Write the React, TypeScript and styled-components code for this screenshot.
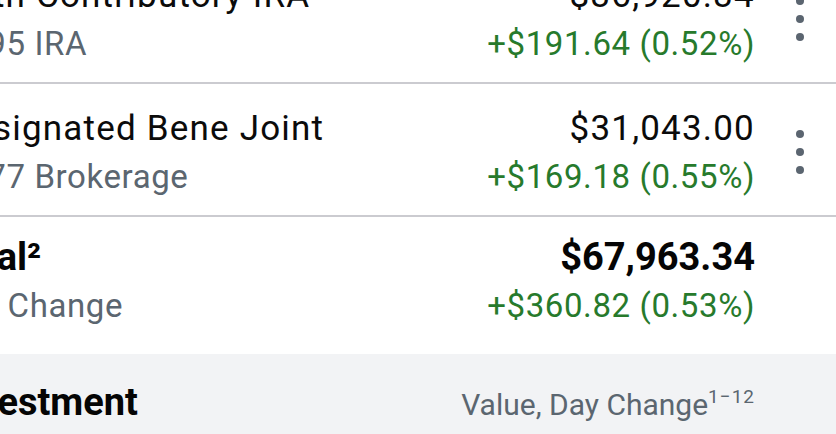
import styled, { createGlobalStyle } from "styled-components";

const GlobalStyle = createGlobalStyle`
  html, body {
    margin: 0;
    padding: 0;
    background: #ffffff;
  }
  body {
    font-family: Roboto, "Noto Sans", "Liberation Sans", sans-serif;
    overflow: hidden;
  }
`;

type Account = {
  name: string;
  number: string;
  type: string;
  value: string;
  change: string;
};

const accounts: Account[] = [
  {
    name: "Roth Contributory IRA",
    number: "1295",
    type: "IRA",
    value: "$36,920.34",
    change: "+$191.64 (0.52%)",
  },
  {
    name: "Designated Bene Joint",
    number: "4877",
    type: "Brokerage",
    value: "$31,043.00",
    change: "+$169.18 (0.55%)",
  },
];

function KebabIcon() {
  return (
    <svg width="8" height="44" viewBox="0 0 8 44" aria-hidden="true">
      <circle cx="4" cy="4" r="4" fill="#5b6570" />
      <circle cx="4" cy="22" r="4" fill="#5b6570" />
      <circle cx="4" cy="40" r="4" fill="#5b6570" />
    </svg>
  );
}

export default function App() {
  return (
    <>
      <GlobalStyle />
      <Viewport>
        <Sheet>
          {accounts.map((account) => (
            <AccountRow key={account.name}>
              <Stack>
                <Title>{account.name}</Title>
                <Sub>
                  {account.number} {account.type}
                </Sub>
              </Stack>
              <Figures>
                <Title>{account.value}</Title>
                <Gain>{account.change}</Gain>
              </Figures>
              <MenuButton aria-label="Account options">
                <KebabIcon />
              </MenuButton>
            </AccountRow>
          ))}

          <TotalRow>
            <Stack $gap={3}>
              <Strong>Total²</Strong>
              <Sub>Day Change</Sub>
            </Stack>
            <Figures $gap={3}>
              <Strong>$67,963.34</Strong>
              <Gain>+$360.82 (0.53%)</Gain>
            </Figures>
            <span />
          </TotalRow>

          <SectionHeader>
            <Strong>Investment</Strong>
            <SectionNote>
              Value, Day Change<Sup>1−12</Sup>
            </SectionNote>
          </SectionHeader>
        </Sheet>
      </Viewport>
    </>
  );
}

const Viewport = styled.div`
  width: 836px;
  height: 434px;
  overflow: hidden;
  background: #ffffff;
`;

const Sheet = styled.div`
  width: 894px;
  margin: -49px 0 0 -58px;
`;

const AccountRow = styled.div`
  display: grid;
  grid-template-columns: 1fr auto 81px;
  align-items: center;
  padding: 22px 0 15px 7px;
  border-bottom: 2px solid #cbcbd0;
`;

const TotalRow = styled(AccountRow)`
  padding: 17px 0 25px 0;
  border-bottom: none;
`;

const Stack = styled.div<{ $gap?: number }>`
  display: flex;
  flex-direction: column;
  gap: ${({ $gap }) => $gap ?? 2}px;
  min-width: 0;
  white-space: nowrap;
`;

const Figures = styled(Stack)`
  align-items: flex-end;
  text-align: right;
`;

const Title = styled.div`
  font-size: 35px;
  line-height: 46px;
  letter-spacing: 1.2px;
  color: #0b0b0b;
`;

const Sub = styled.div`
  font-size: 33px;
  line-height: 46px;
  letter-spacing: 0.6px;
  color: #5b6670;
`;

const Gain = styled(Sub)`
  color: #277a2c;
`;

const Strong = styled.div`
  font-size: 38px;
  line-height: 46px;
  font-weight: 700;
  color: #050505;
  white-space: nowrap;
`;

const MenuButton = styled.button`
  justify-self: start;
  display: flex;
  margin: -2px 0 0 41px;
  padding: 0;
  border: none;
  background: none;
`;

const SectionHeader = styled.div`
  display: flex;
  justify-content: space-between;
  align-items: baseline;
  padding: 25px 81px 30px 4px;
  background: #f2f3f5;
`;

const SectionNote = styled.div`
  font-size: 30px;
  line-height: 46px;
  color: #5b6670;
  white-space: nowrap;
`;

const Sup = styled.sup`
  font-size: 19px;
  line-height: 0;
  vertical-align: 12px;
  letter-spacing: 1px;
`;
